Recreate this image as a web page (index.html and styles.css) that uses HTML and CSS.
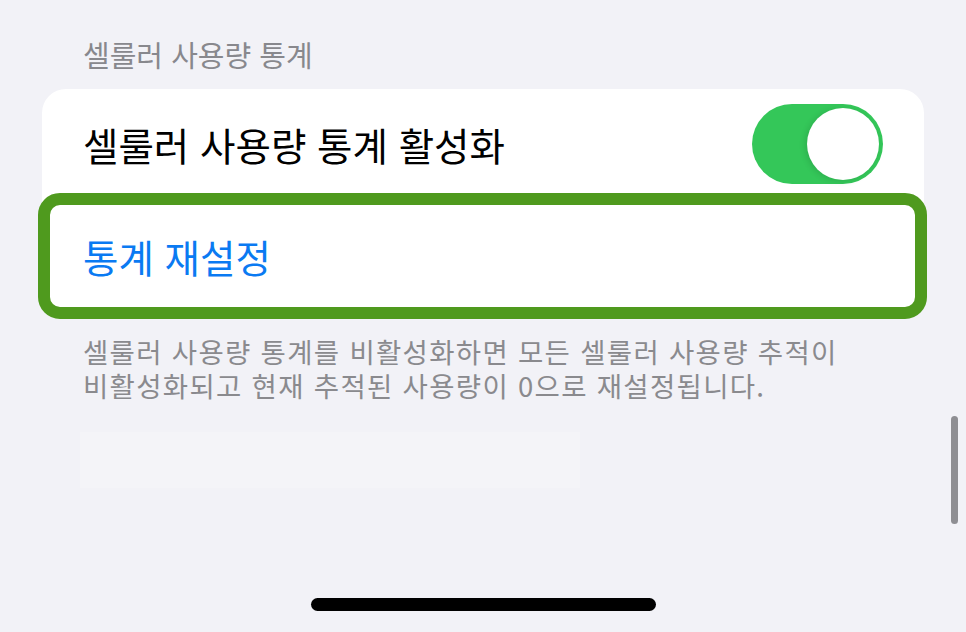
FILE: index.html
```html
<!DOCTYPE html>
<html lang="ko">
<head>
    <meta charset="UTF-8">
    <meta name="viewport" content="width=device-width, initial-scale=1.0">
    <title>셀룰러 사용량 통계</title>
    <link rel="stylesheet" href="styles.css">
</head>
<body>

    <main class="settings">
        <h2 class="group-title">셀룰러 사용량 통계</h2>

        <div class="group">
            <div class="row">
                <span class="row-label">셀룰러 사용량 통계 활성화</span>
                <div class="switch switch--on">
                    <div class="switch-knob"></div>
                </div>
            </div>
            <div class="row row--action row--marked">
                <span class="row-label">통계 재설정</span>
            </div>
        </div>

        <p class="group-footer">셀룰러 사용량 통계를 비활성화하면 모든 셀룰러 사용량 추적이<br>비활성화되고 현재 추적된 사용량이 0으로 재설정됩니다.</p>

        <div class="ghost-box"></div>
    </main>

    <div class="scroll-bar"></div>
    <div class="home-bar"></div>

</body>
</html>
```

FILE: styles.css
```css
body {
    margin: 0;
    height: 632px;
    overflow: hidden;
    background-color: #f2f2f7;
    font-family: "Noto Sans CJK KR", "Noto Sans", sans-serif;
}

.settings {
    padding-top: 36px;
}

.group-title {
    margin: 0 0 17px 83px;
    font-size: 29px;
    line-height: 36px;
    font-weight: 400;
    color: #88888d;
}

.group {
    margin: 0 42px;
    background-color: #fff;
    border-radius: 24px;
}

.row {
    display: flex;
    align-items: center;
    justify-content: space-between;
    height: 110px;
    padding: 0 41px;
}

.row-label {
    font-size: 38.5px;
    color: #000;
}

.row--action {
    height: 113px;
}

.row--action .row-label {
    color: #0a7af2;
}

.row--marked {
    position: relative;
}

.row--marked::after {
    content: "";
    position: absolute;
    top: -6px;
    bottom: -7px;
    left: -4px;
    right: -3px;
    border: 12px solid #4f9a1e;
    border-radius: 22px;
}

.switch {
    width: 131px;
    height: 80px;
    border-radius: 40px;
    background-color: #e9e9ea;
    display: flex;
    align-items: center;
    padding: 0 4px;
    box-sizing: border-box;
}

.switch--on {
    background-color: #34c759;
    justify-content: flex-end;
}

.switch-knob {
    width: 72px;
    height: 72px;
    border-radius: 50%;
    background-color: #fff;
    box-shadow: -2px 1px 6px rgba(0, 0, 0, 0.12);
}

.group-footer {
    margin: 22px 0 0 83px;
    font-size: 27.5px;
    line-height: 34px;
    letter-spacing: 1.3px;
    white-space: nowrap;
    color: #8a8a8e;
}

.ghost-box {
    width: 500px;
    height: 56px;
    margin: 30px 0 0 80px;
    background-color: #f4f4f8;
}

.scroll-bar {
    position: absolute;
    left: 951px;
    top: 416px;
    width: 7px;
    height: 108px;
    border-radius: 4px;
    background-color: #8e8e93;
}

.home-bar {
    position: absolute;
    left: 311px;
    top: 598px;
    width: 345px;
    height: 13px;
    border-radius: 7px;
    background-color: #000;
}
```
